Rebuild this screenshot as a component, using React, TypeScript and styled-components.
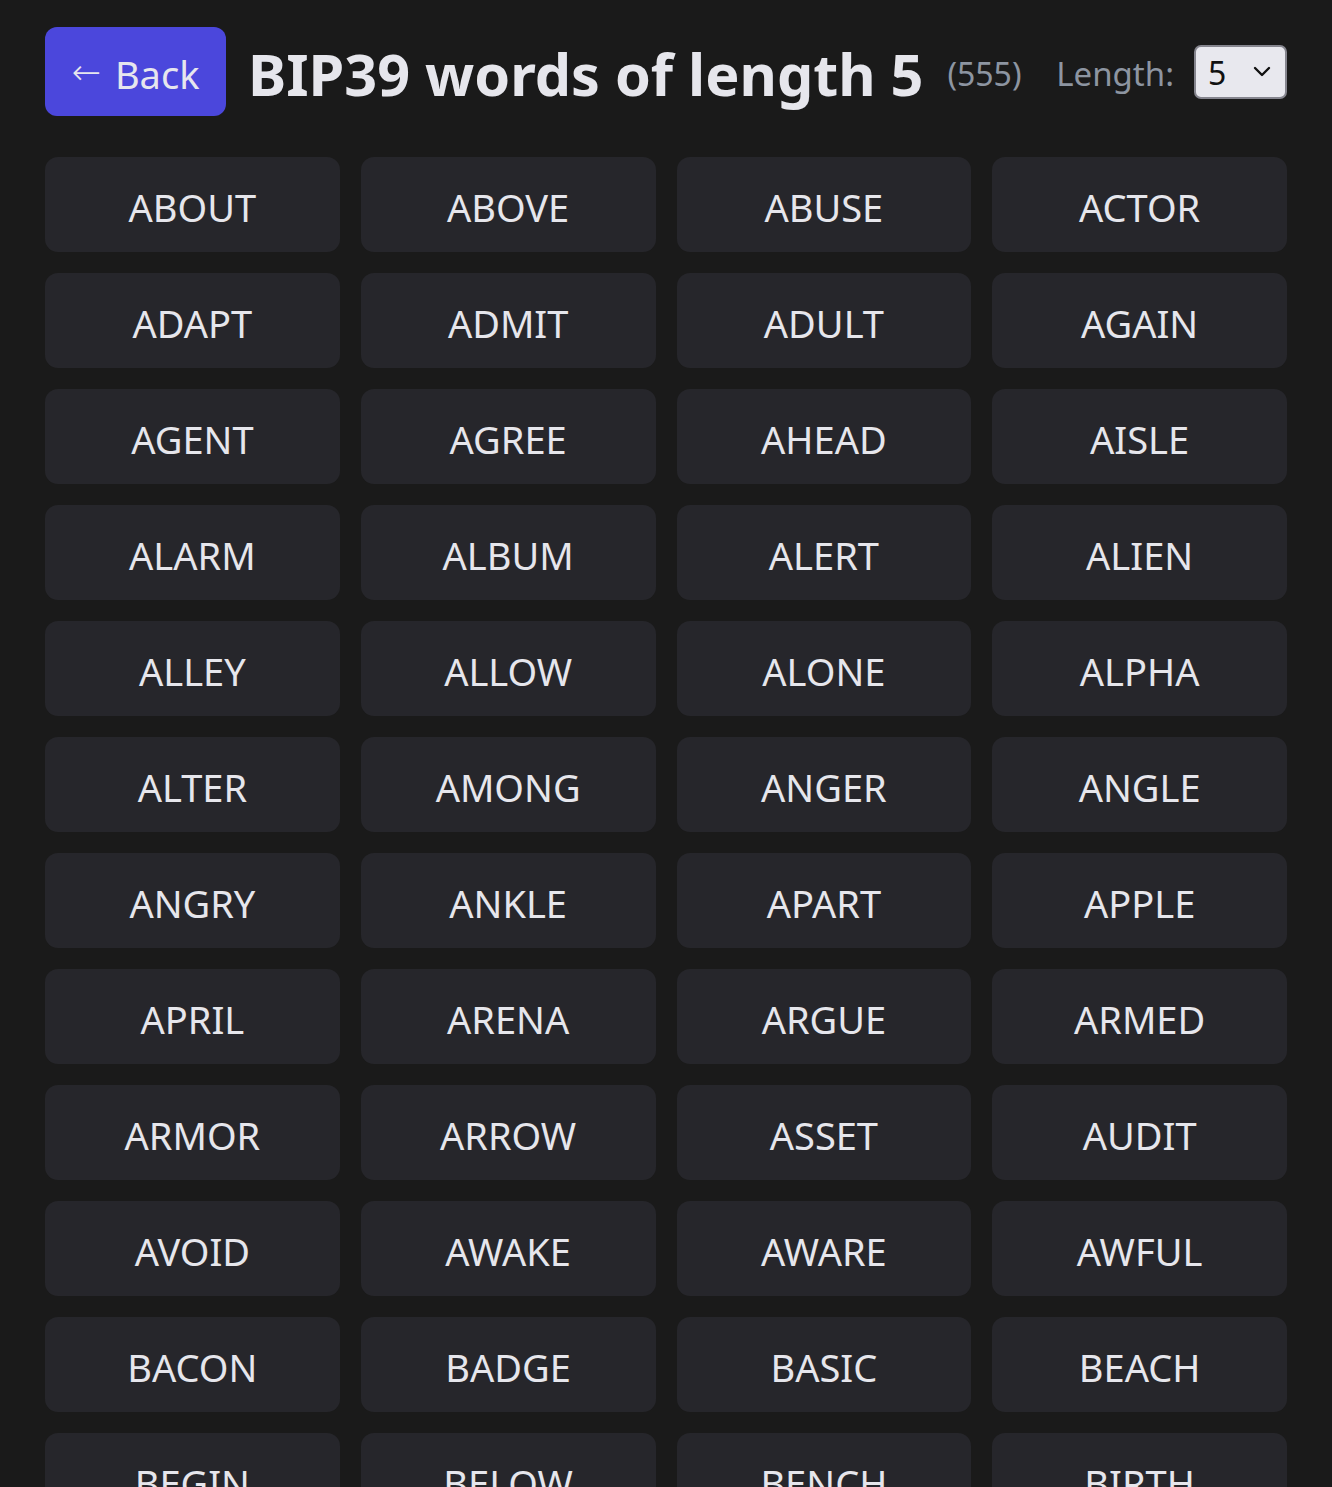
import React, { useState } from 'react';
import styled, { createGlobalStyle } from 'styled-components';

const WORDS = [
  'about', 'above', 'abuse', 'actor', 'adapt', 'admit', 'adult', 'again',
  'agent', 'agree', 'ahead', 'aisle', 'alarm', 'album', 'alert', 'alien',
  'alley', 'allow', 'alone', 'alpha', 'alter', 'among', 'anger', 'angle',
  'angry', 'ankle', 'apart', 'apple', 'april', 'arena', 'argue', 'armed',
  'armor', 'arrow', 'asset', 'audit', 'avoid', 'awake', 'aware', 'awful',
  'bacon', 'badge', 'basic', 'beach', 'begin', 'below', 'bench', 'birth',
  'black', 'blame', 'blast', 'bleak', 'bless', 'blind', 'blood', 'blush',
  'board', 'boost', 'brain', 'brand', 'brass', 'brave', 'bread', 'brick',
];

const GlobalStyle = createGlobalStyle`
  html, body {
    margin: 0;
    background: #1a1a1a;
  }
  body {
    font-family: 'Noto Sans', 'Open Sans', sans-serif;
    color: #e6e6ec;
  }
`;

const Page = styled.div`
  padding: 27px 45px 40px;
`;

const Header = styled.header`
  display: flex;
  align-items: center;
  height: 89px;
  margin-bottom: 41px;
`;

const BackButton = styled.button`
  height: 89px;
  width: 181px;
  border: none;
  border-radius: 12px;
  background: #4b47dc;
  color: #e6e6ee;
  font-family: inherit;
  font-size: 38px;
  padding: 4px 0 0;
  display: flex;
  align-items: center;
  justify-content: center;
  gap: 14px;
  cursor: pointer;
  flex-shrink: 0;
`;

const Arrow = styled.span`
  font-family: 'DejaVu Sans', sans-serif;
  font-size: 35px;
  font-weight: 300;
  margin-top: -4px;
`;

const Title = styled.h1`
  margin: 0 0 0 22px;
  padding-top: 5px;
  font-size: 57.5px;
  font-weight: 700;
  color: #e6e6ec;
  white-space: nowrap;
`;

const Count = styled.span`
  margin-left: 24px;
  padding-top: 4px;
  font-size: 32px;
  color: #8d95a1;
`;

const LengthPicker = styled.label`
  margin-left: auto;
  display: flex;
  align-items: center;
  gap: 20px;
  font-size: 33px;
  color: #8d95a1;
  padding-top: 4px;
`;

const SelectBox = styled.div`
  position: relative;
  width: 93px;
  height: 54px;
  margin-top: -4px;
`;

const Select = styled.select`
  appearance: none;
  width: 100%;
  height: 100%;
  box-sizing: border-box;
  border: 2px solid #85858e;
  border-radius: 7px;
  background: #e8e8ee;
  color: #111;
  font-family: inherit;
  font-size: 32px;
  padding: 2px 0 0 12px;
`;

const Chevron = styled.svg`
  position: absolute;
  right: 16px;
  top: 50%;
  transform: translateY(-50%);
  pointer-events: none;
`;

const Grid = styled.div`
  display: grid;
  grid-template-columns: repeat(4, 1fr);
  gap: 21px;
`;

const WordCard = styled.div`
  height: 95px;
  box-sizing: border-box;
  padding-top: 4px;
  border-radius: 13px;
  background: #26262b;
  display: flex;
  align-items: center;
  justify-content: center;
  font-size: 38px;
  color: #e6e6ec;
  text-transform: uppercase;
`;

export default function App() {
  const [length, setLength] = useState('5');

  return (
    <Page>
      <GlobalStyle />
      <Header>
        <BackButton type="button">
          <Arrow>←</Arrow>
          Back
        </BackButton>
        <Title>BIP39 words of length {length}</Title>
        <Count>(555)</Count>
        <LengthPicker>
          Length:
          <SelectBox>
            <Select value={length} onChange={(e) => setLength(e.target.value)}>
              {['3', '4', '5', '6', '7', '8'].map((n) => (
                <option key={n} value={n}>{n}</option>
              ))}
            </Select>
            <Chevron width="18" height="12" viewBox="0 0 18 12">
              <path d="M2 2 L9 9 L16 2" fill="none" stroke="#111" strokeWidth="2.4" strokeLinecap="round" strokeLinejoin="round" />
            </Chevron>
          </SelectBox>
        </LengthPicker>
      </Header>
      <Grid>
        {WORDS.map((w) => (
          <WordCard key={w}>{w}</WordCard>
        ))}
      </Grid>
    </Page>
  );
}
